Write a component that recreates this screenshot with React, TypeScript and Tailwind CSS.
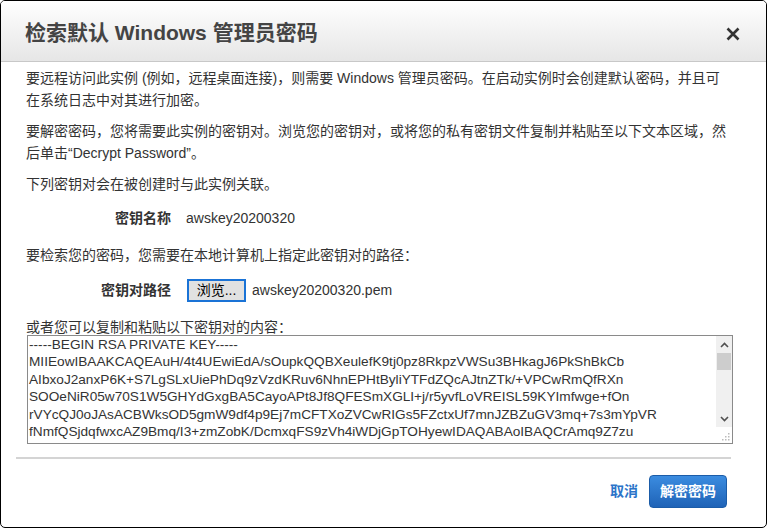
import React from "react";

const keyLines = [
  "-----BEGIN RSA PRIVATE KEY-----",
  "MIIEowIBAAKCAQEAuH/4t4UEwiEdA/sOupkQQBXeulefK9tj0pz8RkpzVWSu3BHkagJ6PkShBkCb",
  "AIbxoJ2anxP6K+S7LgSLxUiePhDq9zVzdKRuv6NhnEPHtByliYTFdZQcAJtnZTk/+VPCwRmQfRXn",
  "SOOeNiR05w70S1W5GHYdGxgBA5CayoAPt8Jf8QFESmXGLI+j/r5yvfLoVREISL59KYImfwge+fOn",
  "rVYcQJ0oJAsACBWksOD5gmW9df4p9Ej7mCFTXoZVCwRIGs5FZctxUf7mnJZBZuGV3mq+7s3mYpVR",
  "fNmfQSjdqfwxcAZ9Bmq/I3+zmZobK/DcmxqFS9zVh4iWDjGpTOHyewIDAQABAoIBAQCrAmq9Z7zu",
];

const font = "font-['Liberation_Sans','Noto_Sans_CJK_SC',sans-serif]";

export default function App() {
  return (
    <div className={`w-[767px] h-[528px] bg-white ${font}`}>
      <div className="w-full h-full border border-black rounded-[5px] overflow-hidden flex flex-col bg-white">
        {/* Header */}
        <div className="h-[61px] shrink-0 border-b border-[#c8c8c8] bg-gradient-to-b from-white to-[#e6e6e6] flex items-center justify-between pl-[24px] pr-[26px] pt-[4px]">
          <div className="text-[21px] font-bold text-[#444]">
            检索默认 Windows 管理员密码
          </div>
          <svg width="14" height="14" viewBox="0 0 14 14" className="mt-[2px]">
            <path d="M1.5 1.5 L12.5 12.5 M12.5 1.5 L1.5 12.5" stroke="#333" strokeWidth="2.6" strokeLinecap="butt" />
          </svg>
        </div>

        {/* Body */}
        <div className="pl-[25px] pr-[36px] pt-[5px] text-[14px] text-[#333]">
          <p className="leading-[22px]">
            要远程访问此实例 (例如，远程桌面连接)，则需要 Windows 管理员密码。在启动实例时会创建默认密码，并且可在系统日志中对其进行加密。
          </p>
          <p className="leading-[22px] mt-[9px]">
            要解密密码，您将需要此实例的密钥对。浏览您的密钥对，或将您的私有密钥文件复制并粘贴至以下文本区域，然后单击“Decrypt Password”。
          </p>
          <p className="leading-[22px] mt-[9px]">下列密钥对会在被创建时与此实例关联。</p>

          <div className="flex items-center leading-[22px] mt-[12px]">
            <div className="w-[145px] text-right font-bold">密钥名称</div>
            <div className="ml-[15px]">awskey20200320</div>
          </div>

          <p className="leading-[22px] mt-[15px]">要检索您的密码，您需要在本地计算机上指定此密钥对的路径：</p>

          <div className="flex items-center h-[22px] mt-[13px]">
            <div className="w-[145px] text-right font-bold">密钥对路径</div>
            <div className="ml-[16px] h-[23px] w-[59px] border-2 border-[#1a73d6] bg-[#e1e1e1] flex items-center justify-center text-[14px] text-black">
              浏览...
            </div>
            <div className="ml-[6px]">awskey20200320.pem</div>
          </div>

          <p className="leading-[16px] mt-[18px]">或者您可以复制和粘贴以下密钥对的内容：</p>

          <div className="mt-[0px] ml-[1px] w-[706px] h-[109px] border border-[#8a8a8a] flex">
            <div className="flex-1 overflow-hidden pl-[1px] text-[13.65px] leading-[17.4px] text-[#333] whitespace-pre font-['Liberation_Sans',sans-serif]">
              {keyLines.map((l, i) => (
                <div key={i}>{l}</div>
              ))}
            </div>
            <div className="w-[16px] flex flex-col">
              <div className="flex-1 bg-[#f0f0f0] flex flex-col">
                <div className="h-[17px] flex items-center justify-center">
                  <svg width="9" height="6" viewBox="0 0 9 6">
                    <path d="M1 5 L4.5 1.5 L8 5" stroke="#505050" strokeWidth="1.6" fill="none" />
                  </svg>
                </div>
                <div className="h-[17px] mx-[1px] bg-[#cdcdcd]" />
                <div className="flex-1" />
                <div className="h-[17px] flex items-center justify-center">
                  <svg width="9" height="6" viewBox="0 0 9 6">
                    <path d="M1 1 L4.5 4.5 L8 1" stroke="#505050" strokeWidth="1.6" fill="none" />
                  </svg>
                </div>
              </div>
              <div className="h-[16px] bg-white flex items-end justify-end pr-[2px] pb-[2px]">
                <svg width="8" height="8" viewBox="0 0 8 8">
                  <rect x="6" y="0" width="1.5" height="1.5" fill="#bbb" />
                  <rect x="3" y="3" width="1.5" height="1.5" fill="#bbb" />
                  <rect x="6" y="3" width="1.5" height="1.5" fill="#bbb" />
                  <rect x="0" y="6" width="1.5" height="1.5" fill="#bbb" />
                  <rect x="3" y="6" width="1.5" height="1.5" fill="#bbb" />
                  <rect x="6" y="6" width="1.5" height="1.5" fill="#bbb" />
                </svg>
              </div>
            </div>
          </div>
        </div>

        {/* Separator */}
        <div className="ml-[15px] w-[715px] h-[2px] bg-[#d4d4d4] mt-[13px]" />

        {/* Footer */}
        <div className="flex items-center justify-end pr-[39px] mt-[16px]">
          <div className="text-[14px] font-bold text-[#2b74c9] mr-[11px]">取消</div>
          <div className="w-[78px] h-[33px] rounded-[4px] border border-[#1b5ca8] bg-gradient-to-b from-[#3b8ce0] to-[#1f63b7] flex items-center justify-center text-white font-bold text-[14px]">
            解密密码
          </div>
        </div>
      </div>
    </div>
  );
}
